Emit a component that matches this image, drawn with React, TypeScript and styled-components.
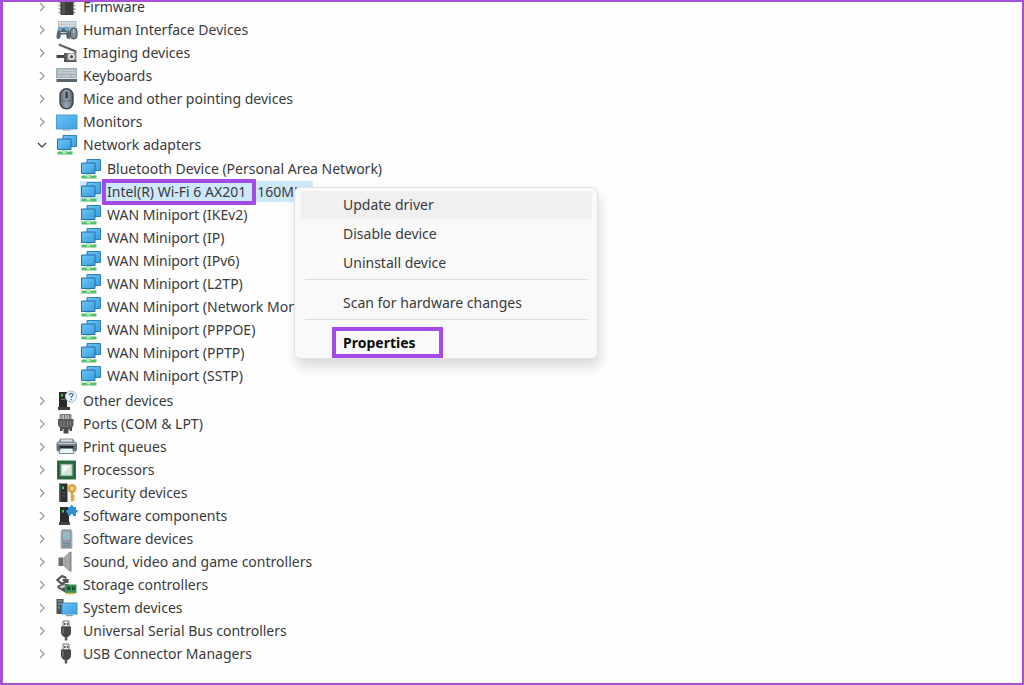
import React, { useState } from 'react';
import styled, { createGlobalStyle, css } from 'styled-components';

const accent = '#a24be6';

const GlobalStyle = createGlobalStyle`
  *, *::before, *::after { box-sizing: border-box; }
  body {
    margin: 0;
    background: #fff;
    color: #3a3a3a;
    font-family: "Noto Sans", "Open Sans", sans-serif;
    font-size: 14px;
  }
  button { font: inherit; color: inherit; border: 0; background: none; padding: 0; }
  ul { list-style: none; margin: 0; padding: 0; }
`;

const Frame = styled.main`
  position: relative;
  min-height: 100vh;
  overflow: hidden;
  border: 2px solid #a552d6;
  border-left-width: 3px;
  padding: 0 0 14px 33px;
  background: #fefefe;
`;

const Tree = styled.ul`
  margin-top: -7px;
`;

const Branch = styled.ul`
  margin: 1px 0 2px;
  padding-left: 44px;
`;

const Row = styled.div<{ $selected?: boolean }>`
  display: flex;
  align-items: center;
  width: max-content;
  height: 23px;
  ${(p) =>
    p.$selected &&
    css`
      padding-right: 2px;
      background: linear-gradient(#cde8fb, #cde8fb) center / 100% 21px no-repeat;
    `}
`;

const Toggle = styled.button`
  display: grid;
  place-items: center;
  width: 12px;
  height: 20px;
  margin-right: 8px;
`;

const Icon = styled.svg`
  display: block;
  flex: none;
  width: 22px;
  height: 22px;
  margin-right: 5px;
`;

const Chevron = styled.svg`
  width: 12px;
  height: 12px;
  fill: none;
  stroke-width: 1.3;
`;

const Label = styled.span`
  line-height: 20px;
  white-space: nowrap;
`;

const Marked = styled.mark`
  display: inline-block;
  margin: 0 5px 0 -1px;
  padding: 0 6px 0 1px;
  color: inherit;
  background: none;
  line-height: 18px;
  box-shadow: 0 0 0 4px ${accent};
`;

const Menu = styled.div`
  position: absolute;
  top: 185px;
  left: 291px;
  display: flex;
  flex-direction: column;
  gap: 1px;
  width: 304px;
  padding: 3px 5px 1px 6px;
  border: 1px solid #e2e2e2;
  border-radius: 6px;
  background: #f9f9f9;
  box-shadow: 2px 8px 12px rgba(0, 0, 0, 0.14);
`;

const MenuItem = styled.button<{ $active?: boolean; $strong?: boolean }>`
  position: relative;
  height: 28px;
  padding: 0 0 2px 42px;
  border-radius: 3px;
  text-align: left;
  background: ${(p) => (p.$active ? '#f0f0f0' : 'transparent')};
  ${(p) =>
    p.$strong &&
    css`
      color: #0c0c0c;
      font-weight: 700;
      &::after {
        content: '';
        position: absolute;
        top: -2px;
        left: 31px;
        width: 111px;
        height: 31px;
        border: 4px solid ${accent};
      }
    `}
`;

const Separator = styled.hr`
  width: 282px;
  height: 1px;
  margin: 1px 0 8px 4px;
  border: 0;
  background: #dedede;
`;

const Gradients = styled.svg`
  position: absolute;
  width: 0;
  height: 0;
`;

const drawings = {
  firmware: (
    <>
      <path d="M2.500 2.500h17M2.500 6h17M2.500 9.500h17M2.500 13h17M2.500 16.500h17" stroke="#9a9a9a" strokeWidth="1.500" />
      <rect x="4.500" y="0" width="13" height="19" fill="#3c3c3c" />
      <path d="M6 1h3v17H6z" fill="#545454" />
    </>
  ),
  hid: (
    <>
      <rect x="2" y="2" width="18.500" height="10" fill="#b4bfc7" />
      <path d="M3 4h16.500M3 6.500h16.500" stroke="#e6ecef" strokeWidth="1.500" strokeDasharray="2 .7" />
      <path d="M2 9.500q2-2 3.500-.5h4q1.500-1.500 3.500.5l1.500 7.500q0 3-2 3-2 0-2.500-4.500H5Q4.500 20 2.200 20 0 20 .6 16z" fill="#59636c" />
      <circle cx="4" cy="10" r="2" fill="#63b3e4" />
      <circle cx="11" cy="10" r="2" fill="#63b3e4" />
      <path d="M4.500 13.500h6" stroke="#c6d0d7" />
      <rect x="14.500" y="9" width="6.500" height="11" rx="3.200" fill="#7f8b95" stroke="#414a52" />
      <path d="M17.800 10v4" stroke="#d5dde2" />
    </>
  ),
  imaging: (
    <>
      <path d="M3 1.500 20.500 8.500V11L2.500 3.500z" fill="#5f5f5f" />
      <path d="M19 9v3" stroke="#777" strokeWidth="2" />
      <path d="M.5 13h7.500v3H.5z" fill="#444" />
      <path d="M8 11h12.500v9H8z" fill="#8d8d8d" />
      <path d="M8 11h3v9H8z" fill="#5b5b5b" />
      <path d="M8 18.500h12.500V20H8z" fill="#505050" />
      <circle cx="15.500" cy="14.800" r="3.200" fill="#efefef" />
      <circle cx="15.500" cy="14.800" r="1.700" fill="#555" />
    </>
  ),
  keyboard: (
    <>
      <rect x=".5" y="3.500" width="20.500" height="13.500" fill="#59636a" />
      <rect x=".5" y="3.500" width="20.500" height="10.500" fill="#a3afb7" />
      <path d="M2 5.500h18M2 8h18" stroke="#d3dbe0" strokeWidth="1.300" strokeDasharray="2 .6" />
      <path d="M2 10.800h3m1 0h9m1 0h4" stroke="#d3dbe0" strokeWidth="1.300" />
      <path d="M.5 13.500H21" stroke="#e4e9ec" />
    </>
  ),
  mouse: (
    <>
      <rect x="4" y=".800" width="13" height="20" rx="6.500" fill="url(#shell)" stroke="#3c4248" strokeWidth="1.400" />
      <path d="M5 12q5.500 2.500 11 0" stroke="#606a73" fill="none" />
      <rect x="9.500" y="3.500" width="2.200" height="7" rx="1" fill="#2c3843" />
    </>
  ),
  monitor: (
    <>
      <rect x=".5" y="4" width="20.500" height="14" fill="url(#screen)" stroke="#4d9fd2" />
      <path d="M7 19h8" stroke="#7ca4bd" />
    </>
  ),
  network: (
    <>
      <path d="M7 1.500h13.500v11H7z" fill="url(#screen)" stroke="#2f7fbb" />
      <path d="M1.500 5h13.500v10.500H1.500z" fill="url(#screen)" stroke="#2a6da3" />
      <path d="M6.500 16h4v1.500h6v3H1.500v-3h5z" fill="#52c168" />
      <path d="M6.500 16h4v3.500h-4z" fill="#b4ebbe" />
    </>
  ),
  other: (
    <>
      <path d="M3 2h8v15H3z" fill="#292b2a" />
      <path d="M2 17h12v3H2z" fill="#3c3f3d" />
      <path d="M5 4h2v2.500H5z" fill="#3ec94f" />
      <path d="M5 9.500h4" stroke="#696969" />
      <circle cx="15" cy="6.500" r="5.600" fill="#e9f3fb" stroke="#9ebdd3" />
      <path d="M13.200 5.300q0-1.900 1.900-1.900 1.900 0 1.900 1.700 0 1-1.800 2v1m0 1v1" fill="none" stroke="#356f9f" strokeWidth="1.200" />
    </>
  ),
  ports: (
    <>
      <path d="M4 1.500h11v5H4z" fill="#c4c4c4" stroke="#777" />
      <path d="M6 2v4m2.500-4v4M11 2v4m2.500-4v4" stroke="#707070" />
      <path d="M2 6h15.500v6l-2 4h-11L2 12z" fill="#5a5a5a" />
      <path d="M5 8v6m3-6v6m3.500-6v6m3-6v5" stroke="#858585" />
      <path d="M4 15h2.500v3H4zm9.500 0H16v3h-2.500zM7.500 15h5v5.500h-5z" fill="#484848" />
    </>
  ),
  printer: (
    <>
      <path d="M4 2.500h13L19.500 7h-18z" fill="#87959e" />
      <path d="M5.500 3.500h10l1 2h-12z" fill="#d9e1e5" />
      <rect x=".5" y="6" width="20.500" height="9.500" rx="2" fill="#66737c" />
      <path d="M2 7.500h17.500" stroke="#c6d0d6" strokeWidth="1.500" />
      <path d="M3.500 10h14v3h-14z" fill="#252b2f" />
      <path d="M4.500 12.500h12L18 17.500H3z" fill="#eaf5fa" stroke="#7b8a93" />
    </>
  ),
  processor: (
    <>
      <rect x="1" y="1.500" width="19" height="19" fill="#34734b" />
      <path d="M2.500 3h16v16h-16z" fill="none" stroke="#215837" />
      <rect x="5" y="5.500" width="11" height="11" fill="#d7e2db" stroke="#9bb7a5" />
      <path d="M6 6.500h9L6 15.500z" fill="#f2f6f3" />
    </>
  ),
  security: (
    <>
      <path d="M3 1.500h8.500V20H3z" fill="#2d2f2e" />
      <path d="M3 1.500h1.500V20H3z" fill="#60645f" />
      <path d="M6 4.500h2V7H6z" fill="#45d058" />
      <path d="M6 11h4m-4 3h4" stroke="#555" />
      <circle cx="16" cy="6.500" r="3.200" fill="#f6dc94" stroke="#e0a23a" strokeWidth="2.500" />
      <path d="M16 10v9.500m0-2.500h2.500M16 14h2.500" stroke="#dfa544" strokeWidth="2.500" />
    </>
  ),
  component: (
    <>
      <path d="M4 2h9v15H4z" fill="#292b2a" />
      <path d="M3 17h11v3H3z" fill="#434644" />
      <path d="M6 5h2v2.500H6z" fill="#3ec94f" />
      <path d="M12 2h2.500q-.5-2 1.200-2t1.200 2H20v3q1.800-.5 1.800 1.200T20 7.300V11h-3q.5-2-1.200-2t-1.200 2H12V8q-2 .3-2-1.500T12 5z" fill="#348ed0" />
    </>
  ),
  software: (
    <>
      <path d="M6 1.500h9l1 2V20.500H5V3.500z" fill="#8a98a2" stroke="#b3bec5" />
      <path d="M7 3.500h7V12H7z" fill="#a6b3bc" />
      <path d="M10 7h2.500v2.500H10z" fill="#54cfe0" />
      <path d="M7 15.500h7m-7 2.500h7" stroke="#74828b" />
    </>
  ),
  sound: (
    <>
      <path d="M2.500 6.500h5v8.500h-5z" fill="#6b6b6b" />
      <path d="M7.500 6.500 13 1.500v18.500l-5.500-5z" fill="#a5a5a5" />
      <path d="M12 2 15.500.500v20.500L12 19z" fill="#858585" />
      <path d="M13 2.500v16.500" stroke="#c7c7c7" />
    </>
  ),
  storage: (
    <>
      <path d="M10.500 4 6 2 1.500 6l4.500 4 5-3.500M6.500 6h5v3" fill="none" stroke="#515752" strokeWidth="2.200" />
      <path d="M1.500 11.500 8 9.500l5 1v8l-3 .5-8.500-5z" fill="#4f5550" />
      <path d="M3 12.500 8.500 10.500l3 1.500-6 2.500z" fill="#c7ccc8" />
      <path d="M9 10.500h11.500v8.500H9z" fill="#36935a" />
      <path d="M11 12.500h3.500v3.500H11zm5 0h3v3.500h-3z" fill="#1b5033" />
      <path d="M10 19.500h9" stroke="#d8b54c" strokeWidth="1.500" />
    </>
  ),
  system: (
    <>
      <path d="M.5 2h7v15h-7z" fill="#4c5357" />
      <path d="M2 4h4M2 7h4" stroke="#a7b0b5" />
      <path d="M2 9.500h1.500v2H2z" fill="#52c36b" />
      <rect x="6" y="6" width="15" height="11" fill="url(#screen)" stroke="#3f92c9" />
      <path d="M10 18.500h7" stroke="#7fa0b3" strokeWidth="1.500" />
    </>
  ),
  usb: (
    <>
      <path d="M7 1h6v6H7z" fill="#ededed" stroke="#767676" />
      <path d="M8 3h1.500v2H8zm2.800 0h1.500v2h-1.500z" fill="#555" />
      <path d="M5 6.500h10V13q0 2.500-3 4H8q-3-1.500-3-4z" fill="#474747" />
      <path d="M7 8v5.500" stroke="#858585" />
      <path d="M10 16.500V20.500" stroke="#555" strokeWidth="2.500" />
    </>
  ),
};

type IconName = keyof typeof drawings;

const DeviceIcon = ({ name }: { name: IconName }) => (
  <Icon viewBox="0 0 22 22" aria-hidden="true">
    {drawings[name]}
  </Icon>
);

type Category = { icon: IconName; label: string; devices?: string[] };

const categories: Category[] = [
  { icon: 'firmware', label: 'Firmware' },
  { icon: 'hid', label: 'Human Interface Devices' },
  { icon: 'imaging', label: 'Imaging devices' },
  { icon: 'keyboard', label: 'Keyboards' },
  { icon: 'mouse', label: 'Mice and other pointing devices' },
  { icon: 'monitor', label: 'Monitors' },
  {
    icon: 'network',
    label: 'Network adapters',
    devices: [
      'Bluetooth Device (Personal Area Network)',
      'Intel(R) Wi-Fi 6 AX201 160MHz',
      'WAN Miniport (IKEv2)',
      'WAN Miniport (IP)',
      'WAN Miniport (IPv6)',
      'WAN Miniport (L2TP)',
      'WAN Miniport (Network Monitor)',
      'WAN Miniport (PPPOE)',
      'WAN Miniport (PPTP)',
      'WAN Miniport (SSTP)',
    ],
  },
  { icon: 'other', label: 'Other devices' },
  { icon: 'ports', label: 'Ports (COM & LPT)' },
  { icon: 'printer', label: 'Print queues' },
  { icon: 'processor', label: 'Processors' },
  { icon: 'security', label: 'Security devices' },
  { icon: 'component', label: 'Software components' },
  { icon: 'software', label: 'Software devices' },
  { icon: 'sound', label: 'Sound, video and game controllers' },
  { icon: 'storage', label: 'Storage controllers' },
  { icon: 'system', label: 'System devices' },
  { icon: 'usb', label: 'Universal Serial Bus controllers' },
  { icon: 'usb', label: 'USB Connector Managers' },
];

const markedName = 'Intel(R) Wi-Fi 6 AX201';

const Device = ({ name }: { name: string }) => {
  const selected = name.startsWith(markedName);
  return (
    <li>
      <Row $selected={selected}>
        <DeviceIcon name="network" />
        {selected ? (
          <Label>
            <Marked>{markedName}</Marked>
            {name.slice(markedName.length + 1)}
          </Label>
        ) : (
          <Label>{name}</Label>
        )}
      </Row>
    </li>
  );
};

const CategoryNode = ({ icon, label, devices }: Category) => {
  const [open, setOpen] = useState(Boolean(devices));
  return (
    <li>
      <Row>
        <Toggle aria-label={label} aria-expanded={open} onClick={() => setOpen(!open)}>
          <Chevron viewBox="0 0 12 12" stroke={open ? '#444' : '#9a9a9a'}>
            <path d={open ? 'M2 4l4 4 4-4' : 'M4 2l4 4-4 4'} />
          </Chevron>
        </Toggle>
        <DeviceIcon name={icon} />
        <Label>{label}</Label>
      </Row>
      {open && devices && (
        <Branch>
          {devices.map((name) => (
            <Device key={name} name={name} />
          ))}
        </Branch>
      )}
    </li>
  );
};

export default function App() {
  return (
    <Frame>
      <GlobalStyle />
      <Gradients aria-hidden="true">
        <defs>
          <linearGradient id="screen" x1="0" y1="0" x2="1" y2="1">
            <stop offset="0" stopColor="#6cc4f5" />
            <stop offset="1" stopColor="#3a9fe0" />
          </linearGradient>
          <linearGradient id="shell" x1="0" y1="0" x2="1" y2="0">
            <stop offset="0" stopColor="#5f6b76" />
            <stop offset=".5" stopColor="#9aa8b4" />
            <stop offset="1" stopColor="#59646e" />
          </linearGradient>
        </defs>
      </Gradients>
      <Tree>
        {categories.map((category) => (
          <CategoryNode key={category.label} {...category} />
        ))}
      </Tree>
      <Menu role="menu">
        <MenuItem role="menuitem" $active>Update driver</MenuItem>
        <MenuItem role="menuitem">Disable device</MenuItem>
        <MenuItem role="menuitem">Uninstall device</MenuItem>
        <Separator />
        <MenuItem role="menuitem">Scan for hardware changes</MenuItem>
        <Separator />
        <MenuItem role="menuitem" $strong>Properties</MenuItem>
      </Menu>
    </Frame>
  );
}
